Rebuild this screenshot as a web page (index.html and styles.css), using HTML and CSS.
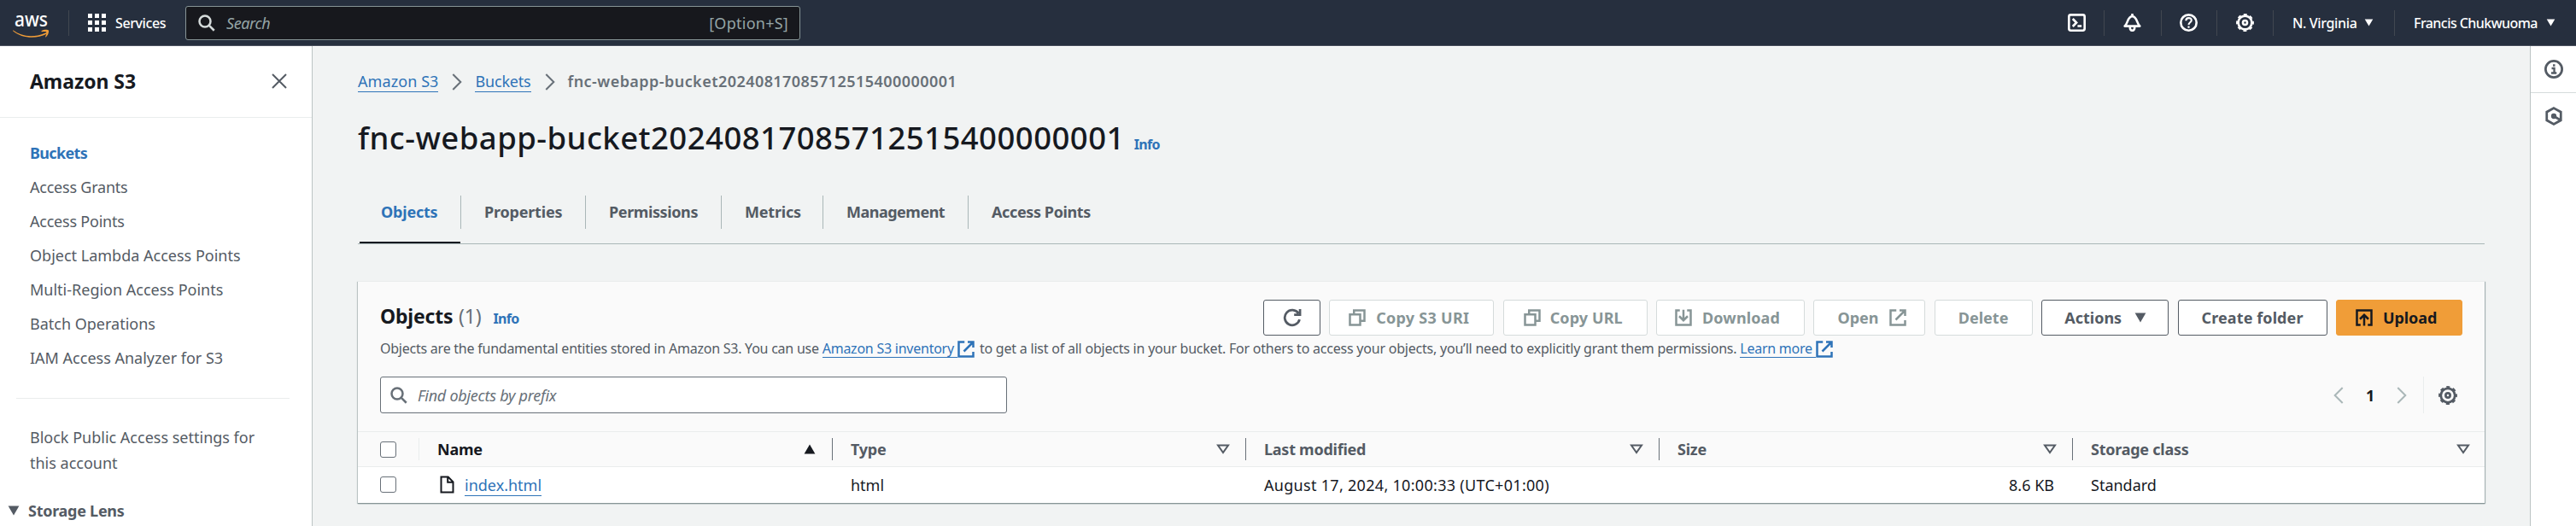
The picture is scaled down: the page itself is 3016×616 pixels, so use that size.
FILE: index.html
```
<!DOCTYPE html>
<html lang="en">
<head>
<meta charset="utf-8">
<title>Amazon S3</title>
<link rel="stylesheet" href="styles.css">
</head>
<body>
<svg class="defs" width="0" height="0">
  <defs>
    <symbol id="search" viewBox="0 0 16 16"><circle cx="6.4" cy="6.4" r="5.2"/><path d="M10.3 10.3 15 15"/></symbol>
    <symbol id="gear" viewBox="0 0 16 16"><circle cx="8" cy="8" r="6"/><circle cx="8" cy="8" r="7.1" stroke-width="1.7" stroke-dasharray="3 2.576" stroke-dashoffset="1.5"/><circle cx="8" cy="8" r="1.9"/></symbol>
    <symbol id="external" viewBox="0 0 16 16"><path d="M6.6 1.2H1.2v13.6h13.6V10.4M9.6 1.2h5.2v5.2M14.4 1.6 6 10"/></symbol>
    <symbol id="copy" viewBox="0 0 16 16"><path d="M1.2 5h9.6v9.8H1.2zM5 4.6V1.2h9.8v9.8h-3.6"/></symbol>
    <symbol id="chevron" viewBox="0 0 12 20"><path d="m1.3 1 9 9-9 9"/></symbol>
    <symbol id="sort" viewBox="0 0 16 12"><path d="M2 1.6h12L8 10z"/></symbol>
    <symbol id="caret" viewBox="0 0 14 12"><path d="M.6.6h12.8L7 11.4z"/></symbol>
  </defs>
</svg>

<header class="topnav">
  <div class="topnav-logo">
    <svg width="46" height="46" viewBox="0 -8 46 46"><text class="aws-word" x="2" y="19" textLength="39" lengthAdjust="spacingAndGlyphs">aws</text><path class="smile" d="M.5 23.5C9 29.6 22 33.5 38.5 26.4c1.6-.7 2.4.6 1 1.4C27 34.200 10 32.800.2 24.2c-.4-.4-.2-.9.300-.700z"/><path class="smile" d="M33.800 24.100c2-1.600 7-1.800 8-.7.900 1.200-.600 6-3 7.900-.5.400-.9.100-.7-.4.800-1.700 1.700-4.400 1.200-5.200-.6-.8-3.500-.6-5.300-.4-.6.100-.800-.600-.2-1.200z"/></svg>
  </div>
  <div class="topnav-services">
    <svg width="21" height="21" viewBox="0 0 21 21"><path class="dots" d="M0 0h5v5H0zM8 0h5v5H8zM16 0h5v5h-5zM0 8h5v5H0zM8 8h5v5H8zM16 8h5v5h-5zM0 16h5v5H0zM8 16h5v5H8zM16 16h5v5h-5z"/></svg>
    <span>Services</span>
  </div>
  <div class="topnav-search">
    <svg class="ico" width="20" height="20"><use href="#search"/></svg>
    <span class="placeholder">Search</span>
    <span class="shortcut">[Option+S]</span>
  </div>
  <div class="topnav-tools">
    <span class="tool tool-shell"><svg class="ico" width="21" height="21" viewBox="0 0 16 16"><rect x="1" y="1" width="14" height="14" rx="1.6"/><path d="m4.400 4.600 3.300 3.400-3.300 3.400M8.700 11h3.600"/></svg></span>
    <span class="tool tool-bell"><svg class="ico" width="21" height="21" viewBox="0 0 16 16"><path d="M1.300 11.100h13.400c-3-2.500-2.200-8.300-6.700-8.800-4.500.5-3.700 6.300-6.700 8.800zM8 0v2.300M5.900 11.600c0 4.600 4.200 4.600 4.200 0" stroke-linejoin="round"/></svg></span>
    <span class="tool tool-help"><svg class="ico" width="21" height="21" viewBox="0 0 16 16"><circle cx="8" cy="8" r="7"/><path d="M5.600 6.200c0-3 4.900-3.100 4.900-.3 0 1.900-2.500 1.900-2.500 4M8 11v1.700" stroke-width="1.600"/></svg></span>
    <span class="tool tool-gear"><svg class="ico" width="21" height="21"><use href="#gear"/></svg></span>
    <span class="tool tool-region">N. Virginia<svg class="fill" width="11" height="9" viewBox="0 0 14 12"><use href="#caret"/></svg></span>
    <span class="tool tool-user">Francis Chukwuoma<svg class="fill" width="11" height="9" viewBox="0 0 14 12"><use href="#caret"/></svg></span>
  </div>
</header>

<div class="shell">
  <nav class="sidebar">
    <div class="sidebar-head">
      <span>Amazon S3</span>
      <svg class="ico" width="18" height="18" viewBox="0 0 18 18"><path d="m1 1 16 16M17 1 1 17"/></svg>
    </div>
    <ul class="side-links">
      <li class="current">Buckets</li>
      <li class="tight">Access Grants</li>
      <li class="tight">Access Points</li>
      <li>Object Lambda Access Points</li>
      <li>Multi-Region Access Points</li>
      <li>Batch Operations</li>
      <li>IAM Access Analyzer for S3</li>
    </ul>
    <div class="side-divider"></div>
    <div class="side-block">Block Public Access settings for<br>this account</div>
    <div class="side-group"><svg class="fill" width="14" height="12"><use href="#caret"/></svg><span>Storage Lens</span></div>
  </nav>

  <main class="main">
    <div class="crumbs">
      <a>Amazon S3</a>
      <svg class="ico" width="12" height="20"><use href="#chevron"/></svg>
      <a class="crumb-buckets">Buckets</a>
      <svg class="ico" width="12" height="20"><use href="#chevron"/></svg>
      <b>fnc-webapp-bucket20240817085712515400000001</b>
    </div>
    <div class="title"><h1>fnc-webapp-bucket20240817085712515400000001</h1><span class="info">Info</span></div>

    <div class="tabs">
      <div class="tab tab-objects"><span>Objects</span></div>
      <div class="tab tab-properties"><span>Properties</span></div>
      <div class="tab tab-permissions"><span>Permissions</span></div>
      <div class="tab tab-metrics"><span>Metrics</span></div>
      <div class="tab tab-management"><span>Management</span></div>
      <div class="tab tab-points"><span>Access Points</span></div>
    </div>

    <section class="card">
      <div class="card-head">
        <div class="head-row">
          <h2>Objects <span class="count">(1)</span><span class="info">Info</span></h2>
          <div class="actions">
            <span class="btn btn-refresh"><svg class="ico" width="22" height="22" viewBox="0 0 16 16"><path d="M14.200 9.600A6.400 6.400 0 1 1 13.300 4.400M14.600.7v4.900H9.600"/></svg></span>
            <span class="btn off btn-uri"><svg class="ico" width="20" height="20"><use href="#copy"/></svg>Copy S3 URI</span>
            <span class="btn off btn-url"><svg class="ico" width="20" height="20"><use href="#copy"/></svg>Copy URL</span>
            <span class="btn off btn-download"><svg class="ico" width="20" height="20" viewBox="0 0 16 16"><path d="M4.600 1.200H1.200v13.600h13.600V1.200h-3.400M8 .5v9.600M4 6.600l4 4 4-4"/></svg>Download</span>
            <span class="btn off btn-open">Open<svg class="ico" width="20" height="20"><use href="#external"/></svg></span>
            <span class="btn off btn-delete">Delete</span>
            <span class="btn btn-actions">Actions<svg class="fill" width="14" height="12"><use href="#caret"/></svg></span>
            <span class="btn btn-create">Create folder</span>
            <span class="btn btn-upload"><svg class="ico" width="20" height="20" viewBox="0 0 16 16"><path d="M4.600 14.800H1.200V1.200h13.600v13.600h-3.400M8 15.500V5.600M4 9.400l4-4 4 4"/></svg>Upload</span>
          </div>
        </div>
        <p class="desc">Objects are the fundamental entities stored in Amazon S3. You can use <a class="inv">Amazon S3 inventory</a><svg class="ico ext" width="20" height="20"><use href="#external"/></svg><span class="desc-rest">to get a list of all objects in your bucket. For others to access your objects, you’ll need to explicitly grant them permissions. </span><a class="learn">Learn more</a><svg class="ico ext" width="20" height="20"><use href="#external"/></svg></p>
        <div class="filter-row">
          <div class="filter"><svg class="ico" width="20" height="20"><use href="#search"/></svg><span>Find objects by prefix</span></div>
          <div class="pager">
            <svg class="ico flip" width="14" height="20" viewBox="0 0 12 20"><use href="#chevron"/></svg>
            <b>1</b>
            <svg class="ico" width="14" height="20" viewBox="0 0 12 20"><use href="#chevron"/></svg>
            <span class="prefs"><svg class="ico" width="22" height="22"><use href="#gear"/></svg></span>
          </div>
        </div>
      </div>
      <div class="grid grid-head">
        <div class="cell pick"><i class="box"></i></div>
        <div class="cell sorted"><span>Name</span><svg class="fill up" width="14" height="12"><use href="#caret"/></svg></div>
        <div class="cell"><span>Type</span><svg class="ico" width="16" height="12"><use href="#sort"/></svg></div>
        <div class="cell"><span>Last modified</span><svg class="ico" width="16" height="12"><use href="#sort"/></svg></div>
        <div class="cell"><span>Size</span><svg class="ico" width="16" height="12"><use href="#sort"/></svg></div>
        <div class="cell last"><span>Storage class</span><svg class="ico" width="16" height="12"><use href="#sort"/></svg></div>
      </div>
      <div class="grid grid-row">
        <div class="cell pick"><i class="box"></i></div>
        <div class="cell file"><svg class="ico" width="17" height="21" viewBox="0 0 17 21"><path d="M1.500 1.500h8.200l5.800 5.800v12.200h-14zM9.200 1.500v6.300h6.300"/></svg><a>index.html</a></div>
        <div class="cell">html</div>
        <div class="cell date">August 17, 2024, 10:00:33 (UTC+01:00)</div>
        <div class="cell size">8.6 KB</div>
        <div class="cell">Standard</div>
      </div>
    </section>
  </main>

  <aside class="rail">
    <div class="rail-item rail-first"><svg class="ico" width="22" height="22" viewBox="0 0 16 16"><circle cx="8" cy="8" r="7"/><path d="M6.200 7.300H8.400v4M5.800 11.300h4.600M7.300 4.700h1.800" stroke-width="1.700"/></svg></div>
    <div class="rail-item"><svg class="ico" width="22" height="22" viewBox="0 0 16 16"><path d="M8 1.200 14 4.500v7L8 14.800 2 11.500v-7zM8 8l5.600 3.400"/><circle class="dot" cx="8" cy="8" r="1.300"/></svg></div>
  </aside>
</div>
</body>
</html>
```
FILE: styles.css
```
* { box-sizing: border-box; }
body {
  margin: 0;
  width: 3016px;
  height: 616px;
  overflow: hidden;
  background: #f1f3f3;
  color: #16191f;
  font: 18px/24px "Noto Sans", "Open Sans", sans-serif;
}
svg { display: block; flex: none; }
.defs { position: absolute; }
.ico { fill: none; stroke: currentColor; stroke-width: 2; }
.fill { fill: currentColor; stroke: none; }
h1, h2, p, ul { margin: 0; padding: 0; font-weight: 400; list-style: none; }

/* top navigation */
.topnav {
  display: flex;
  align-items: center;
  height: 54px;
  background: #262f3e;
  border-bottom: 1px solid #4d5461;
  color: #fff;
  font-size: 16px;
  font-weight: 500;
  letter-spacing: -0.4px;
}
.topnav-logo {
  display: flex;
  align-items: center;
  width: 81px;
  height: 30px;
  padding-left: 15px;
  border-right: 1px solid #414750;
}
.aws-word { font: 500 23px "Noto Sans", sans-serif; letter-spacing: 0; fill: #fff; }
.smile { fill: #f09d38; }
.dots { fill: #fff; }
.topnav-services { display: flex; align-items: center; gap: 11px; width: 136px; padding-left: 22px; }
.topnav-search {
  display: flex;
  align-items: center;
  width: 720px;
  height: 40px;
  padding: 0 13px 0 14px;
  border: 1px solid #879596;
  border-radius: 3px;
  background: #17181d;
  color: #d5dbdb;
}
.placeholder { margin-left: 13px; font-style: italic; font-size: 18px; font-weight: 400; letter-spacing: -0.4px; color: #95a5a6; }
.shortcut { margin-left: auto; font-size: 18px; font-weight: 400; letter-spacing: 0.25px; color: #95a5a6; }
.topnav-tools { display: flex; align-items: center; margin-left: auto; }
.tool { display: flex; align-items: center; height: 30px; border-right: 1px solid #414750; }
.tool-shell { padding-right: 21px; }
.tool-bell { width: 67px; padding-left: 22px; }
.tool-help { width: 65px; padding-left: 21px; }
.tool-gear { width: 66px; padding-left: 22px; }
.tool-region { width: 142px; padding-left: 22px; gap: 9px; letter-spacing: -0.36px; }
.tool-user { width: 212px; padding-left: 22px; gap: 10px; border: 0; letter-spacing: -0.56px; }

/* side navigation */
.shell { display: flex; height: 562px; }
.sidebar { width: 366px; background: #fff; color: #545b64; border-right: 1px solid #bcc4c4; }
.sidebar-head {
  display: flex;
  align-items: center;
  justify-content: space-between;
  height: 84px;
  padding: 0 29px 1px 35px;
  border-bottom: 1px solid #eaeded;
}
.sidebar-head span { font-size: 23px; font-weight: 700; letter-spacing: -0.07px; color: #16191f; }
.side-links { padding: 21px 0 0 35px; line-height: 40px; }
.side-links li { height: 40px; }
.side-links .tight { letter-spacing: -0.22px; }
.side-links .current { font-weight: 700; letter-spacing: -0.65px; color: #2e73b8; }
.side-divider { height: 1px; margin: 27px 26px 31px 19px; background: #eaeded; }
.side-block { padding-left: 35px; line-height: 29.500px; }
.side-group { display: flex; align-items: center; gap: 10px; height: 30px; margin-top: 26px; padding-left: 9px; font-weight: 700; letter-spacing: -0.27px; }

/* main column */
.main { width: 2596px; padding: 28px 53px 0 53px; border-top: 1px solid #fff; }
.crumbs { display: flex; align-items: flex-start; height: 56px; color: #687078; }
.crumbs a { letter-spacing: 0.08px; }
.crumbs .crumb-buckets { letter-spacing: -0.19px; }
.crumbs b { font-weight: 600; letter-spacing: 0.45px; }
.crumbs svg { margin: 3px 15px 0 16px; }
a { color: #2e73b8; border-bottom: 1px solid #2e73b8; }
.title { display: flex; align-items: baseline; height: 90px; line-height: 44px; }
.title h1 { font-size: 36.500px; font-weight: 500; letter-spacing: 0.46px; }
.info { font-size: 16px; font-weight: 700; letter-spacing: -0.7px; color: #2e73b8; }
.title .info { margin-left: 11px; }

.tabs { display: flex; height: 57px; border-bottom: 1px solid #aab7b8; color: #545b64; font-weight: 700; }
.tab { height: 57px; }
.tab span { display: block; height: 39px; line-height: 39px; padding-left: 27px; border-right: 1px solid #aab7b8; letter-spacing: -0.2px; }
.tab-objects { width: 121px; color: #2e73b8; }
.tab-objects::after { content: ""; display: block; width: 118px; height: 2px; margin: 15px 0 0 2px; background: #16191f; }
.tab-properties { width: 146px; }
.tab-permissions { width: 159px; }
.tab-permissions span { letter-spacing: -0.39px; }
.tab-metrics { width: 119px; }
.tab-management { width: 170px; }
.tab-management span { letter-spacing: -0.5px; }
.tab-points span { border: 0; letter-spacing: -0.38px; }

/* objects card */
.card { height: 260px; margin-top: 43px; border-top: 1px solid #eaeded; background: #fff; box-shadow: 0 1px 1px #879596, 1px 1px 1px #aab7b8, -1px 1px 1px #c5cdcd; }
.card-head { height: 175px; padding: 21px 26px 0; background: #fafafa; }
.head-row { display: flex; justify-content: space-between; height: 42px; }
h2 { font-size: 23px; font-weight: 700; line-height: 38px; letter-spacing: -0.2px; }
.count { margin-left: 1px; font-weight: 400; color: #687078; }
h2 .info { margin-left: 14px; }
.actions { display: flex; gap: 10.400px; }
.btn {
  display: flex;
  align-items: center;
  height: 42px;
  padding-bottom: 1px;
  border: 1px solid #545b64;
  border-radius: 3px;
  background: #fff;
  color: #545b64;
  font-weight: 700;
}
.off { border-color: #d5dbdb; color: #879596; }
.btn-refresh { width: 67px; padding-left: 22px; }
.btn-uri { width: 193px; padding-left: 22px; gap: 12px; letter-spacing: 0.26px; }
.btn-url { width: 169px; padding-left: 23px; gap: 11px; letter-spacing: 0.1px; }
.btn-download { width: 174px; padding-left: 21px; gap: 12px; letter-spacing: 0.13px; }
.btn-open { width: 131px; padding-left: 27px; gap: 12px; }
.btn-delete { width: 115px; padding-left: 27px; }
.btn-actions { width: 149px; padding-left: 26px; gap: 15px; }
.btn-create { width: 175px; padding-left: 27px; letter-spacing: 0.09px; }
.btn-upload { width: 148px; padding-left: 22px; gap: 12px; border-color: #f09d38; background: #f09d38; color: #16191f; letter-spacing: -0.1px; }
.desc { display: flex; height: 30px; line-height: 30px; font-size: 16px; letter-spacing: -0.24px; color: #545b64; white-space: pre; }
.desc a { height: 26px; padding-right: 4px; }
.desc .ext { margin: 6px 6px 0 0; color: #2e73b8; }
.desc-rest { letter-spacing: -0.22px; }
.filter-row { display: flex; justify-content: space-between; margin-top: 18px; }
.filter {
  display: flex;
  align-items: center;
  gap: 12px;
  width: 734px;
  height: 43px;
  padding-left: 11px;
  border: 1px solid #687078;
  border-radius: 3px;
  background: #fff;
  color: #687078;
  font-style: italic;
  letter-spacing: -0.26px;
}
.pager { display: flex; align-items: center; color: #aab7b8; }
.pager b { width: 60px; padding-left: 25px; color: #16191f; }
.flip { transform: scaleX(-1); }
.prefs { display: flex; align-items: center; height: 43px; margin-left: 18px; padding: 0 6px 0 17px; border-left: 1px solid #eaeded; color: #545b64; }

.grid { display: grid; grid-template-columns: 72px 484px 484px 484px 484px 482px; align-items: center; }
.grid-head { height: 42px; background: #fafafa; border-top: 1px solid #eaeded; border-bottom: 1px solid #eaeded; color: #545b64; font-weight: 700; letter-spacing: -0.25px; }
.cell { display: flex; align-items: center; padding-left: 21px; }
.grid-head .cell { justify-content: space-between; height: 26px; padding-right: 18px; border-right: 1px solid #687078; }
.grid-head .pick { border-color: #eaeded; }
.grid-head .last { padding-right: 17px; border: 0; }
.grid-head .sorted { padding-right: 19px; color: #16191f; }
.grid .pick { padding-left: 26px; }
.up { transform: scaleY(-1); }
.box { width: 19px; height: 19px; border: 1px solid #687078; border-radius: 3px; background: #fff; }
.grid-row { height: 41px; }
.file { gap: 12px; padding-left: 24px; }
.file a { margin-top: 1px; }
.date { letter-spacing: 0.3px; }
.size { justify-content: flex-end; padding-right: 22px; }

/* right rail */
.rail { width: 54px; background: #fff; border-left: 1px solid #bcc4c4; color: #545b64; }
.rail-item { display: flex; justify-content: center; padding-top: 16px; }
.rail-first { height: 55px; border-bottom: 1px solid #d5dbdb; }
.dot { fill: currentColor; }
```
